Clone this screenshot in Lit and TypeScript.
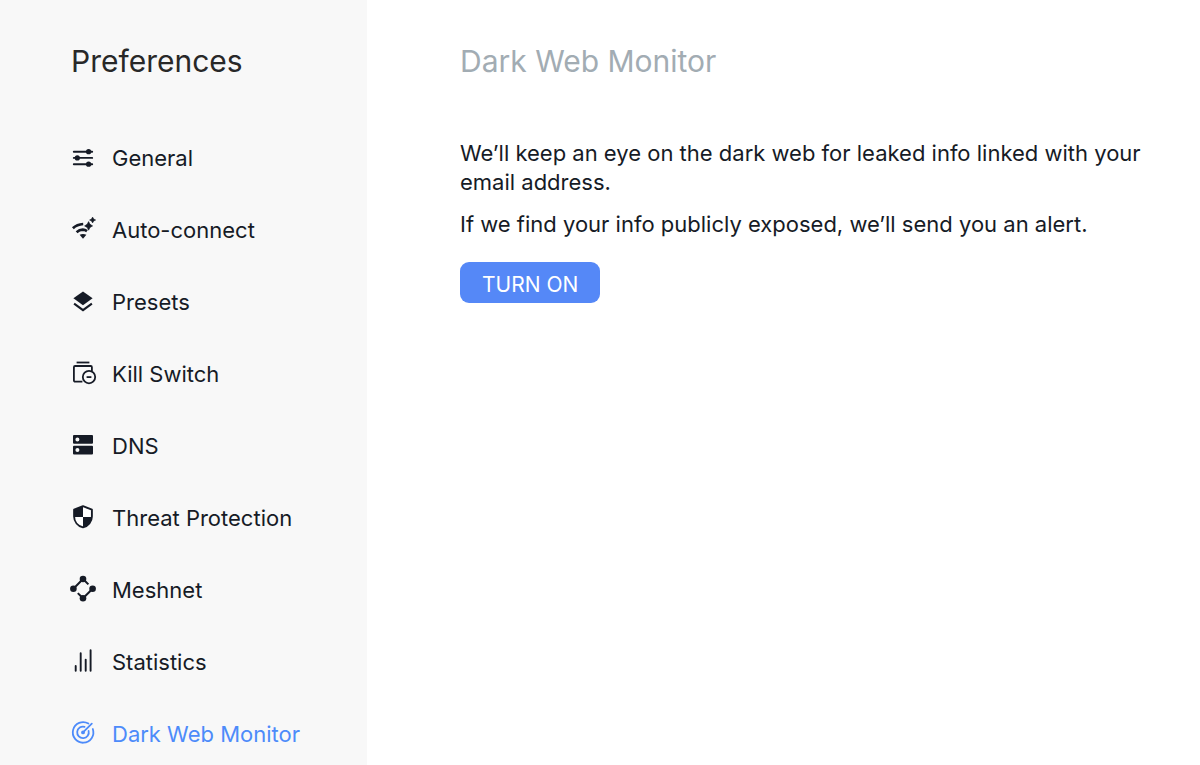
import { LitElement, html, css, svg, SVGTemplateResult } from "lit";
import { customElement, state } from "lit/decorators.js";
import { classMap } from "lit/directives/class-map.js";

interface Section {
  name: string;
  icon: SVGTemplateResult;
}

const sections: Section[] = [
  {
    name: "General",
    icon: svg`<g stroke="currentColor" stroke-width="1.9" stroke-linecap="round">
        <path d="M4.8 6.7h18.4M4.8 12.9h18.4M4.8 19.2h18.4" />
      </g>
      <g fill="currentColor">
        <circle cx="19.6" cy="6.7" r="2.6" /><circle cx="8.3" cy="12.9" r="2.6" /><circle cx="19.6" cy="19.2" r="2.6" />
      </g>`,
  },
  {
    name: "Auto-connect",
    icon: svg`<g fill="none" stroke="currentColor" stroke-width="2.7">
        <path d="M3.9 11.2Q8 7.4 14.2 7" />
        <path d="M7.6 15.3Q10.4 12.8 13.8 12.7Q16 12.7 18 14.2" />
      </g>
      <path fill="currentColor" d="M10.6 17.8Q14 16 17.4 17.8L14 21.8Z" />
      <path fill="currentColor" d="M19.6 4.6Q20.4 8 23.6 8.9Q20.4 9.8 19.6 13.2Q18.8 9.8 15.6 8.9Q18.8 8 19.6 4.6Z" stroke="currentColor" stroke-width=".6" />
      <path fill="currentColor" d="M23.6 .1Q24.2 2.4 26.6 3Q24.2 3.6 23.6 5.9Q23 3.6 20.6 3Q23 2.4 23.6 .1Z" stroke="currentColor" stroke-width=".6" />`,
  },
  {
    name: "Presets",
    icon: svg`<path fill="currentColor" d="M14 2.4L23.6 9.2L14 16.2L4.4 9.2Z" />
      <path fill="none" stroke="currentColor" stroke-width="2.1" d="M5.1 14.7L14 21.2L22.9 14.7" />`,
  },
  {
    name: "Kill Switch",
    icon: svg`<g fill="none" stroke="currentColor" stroke-width="1.8">
        <path d="M7.6 1.5h12.8" />
        <path d="M13.4 20.6H6.1a1.2 1.2 0 0 1-1.2-1.2V6.2A1.2 1.2 0 0 1 6.1 5h15.6a1.2 1.2 0 0 1 1.2 1.2v4.1" />
        <circle cx="20" cy="16.1" r="6.2" />
        <path d="M17.6 16.1h4.8" />
      </g>`,
  },
  {
    name: "DNS",
    icon: svg`<path fill="currentColor" fill-rule="evenodd"
        d="M5 2h18a1 1 0 0 1 1 1v6.7a1 1 0 0 1-1 1H5a1 1 0 0 1-1-1V3a1 1 0 0 1 1-1ZM8.4 4.4a2 2 0 1 0 0 4a2 2 0 1 0 0-4ZM5 12.7h18a1 1 0 0 1 1 1v6.7a1 1 0 0 1-1 1H5a1 1 0 0 1-1-1v-6.7a1 1 0 0 1 1-1ZM8.4 15.1a2 2 0 1 0 0 4a2 2 0 1 0 0-4Z" />`,
  },
  {
    name: "Threat Protection",
    icon: svg`<path fill="#fff" stroke="currentColor" stroke-width="1.9" stroke-linejoin="round"
        d="M14 1.2L22.9 4.7V11.4C22.9 16.6 19.2 20.9 14 22.4C8.8 20.9 5.1 16.6 5.1 11.4V4.7Z" />
      <path fill="currentColor" d="M14 1.2V12H5.1V4.7ZM14 12H22.9C22.6 17 19 21 14 22.4Z" />`,
  },
  {
    name: "Meshnet",
    icon: svg`<g fill="currentColor">
        <circle cx="14" cy="2" r="3.3" /><circle cx="4.4" cy="11.7" r="3.3" />
        <circle cx="23.6" cy="11.7" r="3.3" /><circle cx="14" cy="21.3" r="3.3" />
      </g>
      <path fill="none" stroke="currentColor" stroke-width="2" d="M4.4 11.7L14 2L19.4 7.4M23.6 11.7L14 21.3L8.8 16.1" />`,
  },
  {
    name: "Statistics",
    icon: svg`<path fill="none" stroke="currentColor" stroke-width="1.9" stroke-linecap="round"
        d="M6.7 17V21.8M11.7 4.3V21.8M16.7 10.6V21.8M21.6 1.2V21.8" />`,
  },
  {
    name: "Dark Web Monitor",
    icon: svg`<g fill="none" stroke="currentColor" stroke-width="1.8" stroke-linecap="round">
        <path d="M19.4 2.6A10.3 10.3 0 1 0 23.8 8" />
        <path d="M15.6 5.8A5.8 5.8 0 1 0 19.6 9.9" />
        <path d="M14 11.4L22.8 2.7" />
      </g>
      <circle cx="14" cy="11.4" r="1.9" fill="currentColor" />`,
  },
];

@customElement("app-root")
export class AppRoot extends LitElement {
  @state() private current = "Dark Web Monitor";

  static styles = css`
    :host {
      display: flex;
      min-height: 100vh;
      background: #fff;
      color: #161b26;
      font: 22px/28px Inter, "Liberation Sans", sans-serif;
    }
    .sidebar {
      box-sizing: border-box;
      flex: 0 0 367px;
      max-height: 100vh;
      overflow: hidden;
      padding: 40px 24px 0 69px;
      background: #f8f8f8;
    }
    .title {
      margin: 0;
      font-size: 30px;
      line-height: 42px;
      font-weight: 400;
    }
    .sidebar .title {
      padding-left: 2px;
      color: #282828;
    }
    .list {
      margin: 41px 0 0;
      padding: 0;
      list-style: none;
    }
    .item {
      display: flex;
      align-items: center;
      gap: 15px;
      height: 72px;
      color: inherit;
      text-decoration: none;
      white-space: nowrap;
    }
    .item.active {
      color: #4d8bfa;
    }
    .label {
      padding-bottom: 2px;
    }
    .icon {
      flex: none;
      width: 28px;
      height: 28px;
      overflow: visible;
    }
    .content {
      flex: 1;
      min-width: 0;
      padding: 40px 48px 40px 93px;
    }
    .content .title {
      margin-bottom: 57px;
      color: #a2acb3;
    }
    .text {
      margin: 0 0 13px;
      line-height: 29px;
    }
    .button {
      display: block;
      margin-top: 23px;
      padding: 9px 22px 4px;
      border: 0;
      border-radius: 9px;
      background: #5588f7;
      color: #fff;
      font: inherit;
      font-size: 21px;
      cursor: pointer;
    }
  `;

  render() {
    return html`
      <nav class="sidebar" aria-label="Preferences">
        <h1 class="title">Preferences</h1>
        <ul class="list">
          ${sections.map(
            (s) => html`<li>
              <a
                class=${classMap({ item: true, active: s.name === this.current })}
                href="#"
                @click=${(e: Event) => {
                  e.preventDefault();
                  this.current = s.name;
                }}
              >
                <svg class="icon" viewBox="0 0 28 28" aria-hidden="true">${s.icon}</svg>
                <span class="label">${s.name}</span>
              </a>
            </li>`
          )}
        </ul>
      </nav>
      <main class="content">
        <h2 class="title">Dark Web Monitor</h2>
        <p class="text">We’ll keep an eye on the dark web for leaked info linked with your email address.</p>
        <p class="text">If we find your info publicly exposed, we’ll send you an alert.</p>
        <button class="button" type="button">TURN ON</button>
      </main>
    `;
  }
}
